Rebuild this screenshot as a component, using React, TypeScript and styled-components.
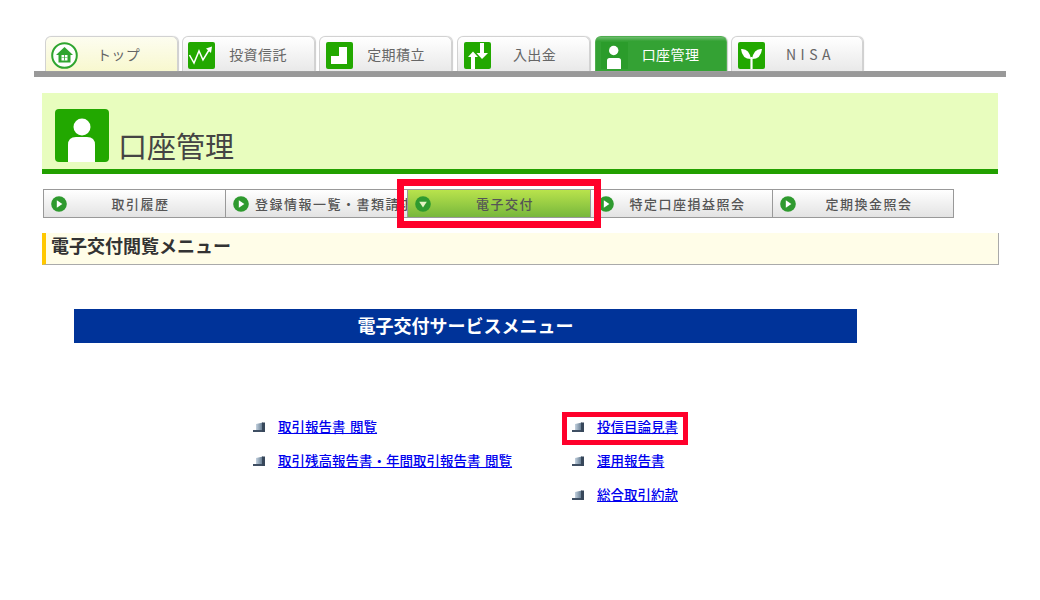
import React from 'react'
import styled, { createGlobalStyle } from 'styled-components'

const GlobalStyle = createGlobalStyle`
html, body {
  margin: 0;
  padding: 0;
  background: #fff;
}
body {
  font-family: "Noto Sans CJK JP", "Liberation Sans", sans-serif;
}
*, *::before, *::after {
  box-sizing: border-box;
}
`
const Page = styled.div`
width: 1040px;
height: 600px;
overflow: hidden;
padding-top: 36px;
`
const TabBar = styled.nav`
display: flex;
margin-left: 45px;
height: 35px;
`
const Tab = styled.a<{ $kind?: 'home' | 'active'; $width: number; $gap: number; $inset: number }>`
display: flex;
align-items: flex-start;
flex: none;
width: ${p => p.$width}px;
margin-right: ${p => p.$gap}px;
padding: 5px 0 0 ${p => p.$inset}px;
border: 1px solid ${p => (p.$kind === 'active' ? '#4fae4f' : '#d2d2d2')};
border-bottom: none;
border-radius: 6px 6px 0 0;
box-shadow: 1px 0 1px #ccc;
color: ${p => (p.$kind === 'active' ? '#fff' : '#666')};
background: ${p =>
    p.$kind === 'active'
      ? 'linear-gradient(#6fbd6f, #34a234 12%, #34a234)'
      : p.$kind === 'home'
        ? 'linear-gradient(#fdfdf0, #f8f8cf)'
        : 'linear-gradient(#fff, #e9e9e9)'};
`
const TabIcon = styled.svg`
width: 27px;
height: 27px;
flex: none;
`
const TabLabel = styled.span<{ $wide?: boolean; $right: number }>`
flex: 1;
text-align: center;
font-size: 14px;
line-height: 24px;
white-space: nowrap;
padding-right: ${p => p.$right}px;
letter-spacing: ${p => (p.$wide ? '4.5px' : '0.4px')};
`
const GrayBar = styled.div`
height: 6px;
margin-left: 34px;
width: 972px;
background: #999;
`
const Header = styled.header`
display: flex;
align-items: flex-end;
gap: 9px;
width: 956px;
height: 81px;
margin: 16px 0 0 42px;
padding: 0 0 7px 13px;
background: #e8fdbe;
border-bottom: 5px solid #22a000;
`
const HeaderIcon = styled.svg`
width: 54px;
height: 53px;
flex: none;
`
const Title = styled.h1`
margin: 0 0 2px;
font-size: 29px;
font-weight: 400;
line-height: 30px;
color: #444;
`
const SubNav = styled.div`
display: grid;
grid-template-columns: 182px 182px 183px 182px 181px;
width: 910px;
height: 29px;
margin: 15px 0 0 44px;
`
const SubItem = styled.a<{ $active?: boolean }>`
position: relative;
display: flex;
align-items: center;
gap: 6px;
min-width: 0;
padding: 0 17px 0 7px;
border: 1px solid #999;
margin-left: -1px;
overflow: ${p => (p.$active ? 'visible' : 'hidden')};
z-index: ${p => (p.$active ? 1 : 0)};
background: ${p =>
    p.$active
      ? 'linear-gradient(#b9e34c, #77b73c)'
      : 'linear-gradient(#fff, #e3e3e3)'};
`
const SubIcon = styled.svg`
width: 16px;
height: 16px;
flex: none;
`
const SubLabel = styled.span`
flex: 1;
min-width: 0;
text-align: center;
white-space: nowrap;
font-size: 13px;
font-weight: 500;
letter-spacing: 1.5px;
color: #555;
`
const NavFrame = styled.span`
position: absolute;
left: -11px;
top: -11px;
width: 204px;
height: 49px;
border: 7px solid #ff002b;
pointer-events: none;
`
const SectionTitle = styled.h2`
width: 957px;
height: 32px;
margin: 15px 0 0 42px;
padding-left: 5px;
border-left: 4px solid #ffc800;
border-right: 1px solid #aaa;
border-bottom: 1px solid #aaa;
background: #fffde8;
font-size: 18px;
font-weight: 700;
line-height: 25px;
color: #333;
`
const Banner = styled.div`
width: 783px;
height: 34px;
margin: 44px 0 0 74px;
background: #003399;
color: #fff;
font-size: 18px;
font-weight: 700;
line-height: 32px;
text-align: center;
`
const LinkGrid = styled.div`
display: grid;
grid-template-columns: 319px 300px;
margin: 66px 0 0 253px;
`
const LinkColumn = styled.ul`
margin: 0;
padding: 0;
list-style: none;
`
const LinkRow = styled.li`
position: relative;
display: flex;
align-items: center;
gap: 13px;
height: 34px;
`
const Bullet = styled.svg`
width: 12px;
height: 10px;
flex: none;
margin-top: 2px;
`
const DocLink = styled.a`
font-size: 13.5px;
font-weight: 500;
word-spacing: 1.5px;
color: #0000ee;
text-decoration: underline;
white-space: nowrap;
`
const LinkFrame = styled.span`
position: absolute;
left: -10px;
top: 3px;
width: 126px;
height: 33px;
border: 5px solid #ff002b;
pointer-events: none;
`

const HomeIcon = () => (
  <TabIcon viewBox="0 0 27 27">
    <circle cx="13.5" cy="13.5" r="12.3" fill="#fff" stroke="#2fa52f" strokeWidth="2" />
    <path d="M13.5 5 L22 13 H19.5 V20.5 H7.5 V13 H5 Z" fill="#2fa52f" />
    <path d="M10.5 13h6v5.5h-6z" fill="#fff" />
    <path d="M13.1 13h.8v5.5h-.8zM10.5 15.4h6v.7h-6z" fill="#2fa52f" />
  </TabIcon>
)
const TrendIcon = () => (
  <TabIcon viewBox="0 0 27 27">
    <rect width="27" height="27" rx="2" fill="#22a800" />
    <path d="M1.5 13 L6 21 L11 9 L15 18 L21 8" fill="none" stroke="#fff" strokeWidth="1.5" />
    <path d="M18 6.5 L24 4.5 L23 11 Z" fill="#fff" />
  </TabIcon>
)
const StepsIcon = () => (
  <TabIcon viewBox="0 0 27 27">
    <rect width="27" height="27" rx="2" fill="#22a800" />
    <path d="M5 22 V14 H13 V5 H21 V22 Z" fill="#fff" />
  </TabIcon>
)
const TransferIcon = () => (
  <TabIcon viewBox="0 0 27 27">
    <rect width="27" height="27" rx="2" fill="#22a800" />
    <path d="M4 15 L9 9.5 L14 15 H11 V27 H7 V15 Z" fill="#fff" />
    <path d="M16 1 H20 V11 H24 L18 17 L12.5 11 H16 Z" fill="#fff" />
  </TabIcon>
)
const PersonIcon = () => (
  <TabIcon viewBox="0 0 27 27">
    <rect width="27" height="27" fill="#2b9c2b" />
    <circle cx="12.7" cy="8.5" r="4.7" fill="#fff" />
    <path d="M6 27 V18.5 Q6 16 8.5 16 H17.5 Q20 16 20 18.5 V27 Z" fill="#fff" />
  </TabIcon>
)
const SproutIcon = () => (
  <TabIcon viewBox="0 0 27 27">
    <rect width="27" height="27" rx="2" fill="#22a800" />
    <path d="M3 7 Q11 6 13 17 Q4 17 3 7 Z" fill="#fff" />
    <path d="M24 7 Q16 6 14 17 Q23 17 24 7 Z" fill="#fff" />
    <path d="M12.4 15h2.2v12h-2.2z" fill="#fff" />
  </TabIcon>
)
const PlayIcon = ({ down }: { down?: boolean }) => (
  <SubIcon viewBox="0 0 16 16">
    <circle cx="8" cy="8" r="7.8" fill="#2f9a2f" />
    {down ? (
      <path d="M4.2 5.8h7.6L8 11.4z" fill="#e4f2c4" />
    ) : (
      <path d="M5.8 4.2v7.6L11.4 8z" fill="#fff" />
    )}
  </SubIcon>
)
const LinkBullet = () => (
  <Bullet viewBox="0 0 12 10">
    <defs>
      <linearGradient id="bullet" x1="0" y1="0" x2="1" y2="0">
        <stop offset="0" stopColor="#c4d2df" />
        <stop offset="1" stopColor="#5b7288" />
      </linearGradient>
    </defs>
    <path d="M3 2 L10 0.5 V8 H3 Z" fill="url(#bullet)" />
    <path d="M0 8 H12 V10 H0 Z" fill="#3f4f63" />
    <path d="M9 0.5h3V10H9z" fill="#37475a" />
  </Bullet>
)

const App = () => {
  return (
    <Page>
      <GlobalStyle />
      <TabBar>
        <Tab $kind="home" $width={133} $gap={4} $inset={5}><HomeIcon /><TabLabel $right={18}>トップ</TabLabel></Tab>
        <Tab $width={133} $gap={4} $inset={5}><TrendIcon /><TabLabel $right={13}>投資信託</TabLabel></Tab>
        <Tab $width={133} $gap={5} $inset={6}><StepsIcon /><TabLabel $right={12}>定期積立</TabLabel></Tab>
        <Tab $width={133} $gap={5} $inset={6}><TransferIcon /><TabLabel $right={11}>入出金</TabLabel></Tab>
        <Tab $kind="active" $width={132} $gap={4} $inset={5}><PersonIcon /><TabLabel $right={13}>口座管理</TabLabel></Tab>
        <Tab $width={132} $gap={0} $inset={6}><SproutIcon /><TabLabel $wide $right={6}>NISA</TabLabel></Tab>
      </TabBar>
      <GrayBar />
      <Header>
        <HeaderIcon viewBox="0 0 54 53">
          <rect width="54" height="53" rx="4" fill="#22a800" />
          <circle cx="27" cy="18" r="8.5" fill="#fff" />
          <path d="M13 53 V36 Q13 28 21 28 H32 Q40 28 40 36 V53 Z" fill="#fff" />
        </HeaderIcon>
        <Title>口座管理</Title>
      </Header>
      <SubNav>
        <SubItem><PlayIcon /><SubLabel>取引履歴</SubLabel></SubItem>
        <SubItem><PlayIcon /><SubLabel>登録情報一覧・書類請求</SubLabel></SubItem>
        <SubItem $active>
          <PlayIcon down />
          <SubLabel>電子交付</SubLabel>
          <NavFrame />
        </SubItem>
        <SubItem><PlayIcon /><SubLabel>特定口座損益照会</SubLabel></SubItem>
        <SubItem><PlayIcon /><SubLabel>定期換金照会</SubLabel></SubItem>
      </SubNav>
      <SectionTitle>電子交付閲覧メニュー</SectionTitle>
      <Banner>電子交付サービスメニュー</Banner>
      <LinkGrid>
        <LinkColumn>
          <LinkRow><LinkBullet /><DocLink href="#">取引報告書 閲覧</DocLink></LinkRow>
          <LinkRow><LinkBullet /><DocLink href="#">取引残高報告書・年間取引報告書 閲覧</DocLink></LinkRow>
        </LinkColumn>
        <LinkColumn>
          <LinkRow>
            <LinkBullet />
            <DocLink href="#">投信目論見書</DocLink>
            <LinkFrame />
          </LinkRow>
          <LinkRow><LinkBullet /><DocLink href="#">運用報告書</DocLink></LinkRow>
          <LinkRow><LinkBullet /><DocLink href="#">総合取引約款</DocLink></LinkRow>
        </LinkColumn>
      </LinkGrid>
    </Page>
  )
}

export default App
